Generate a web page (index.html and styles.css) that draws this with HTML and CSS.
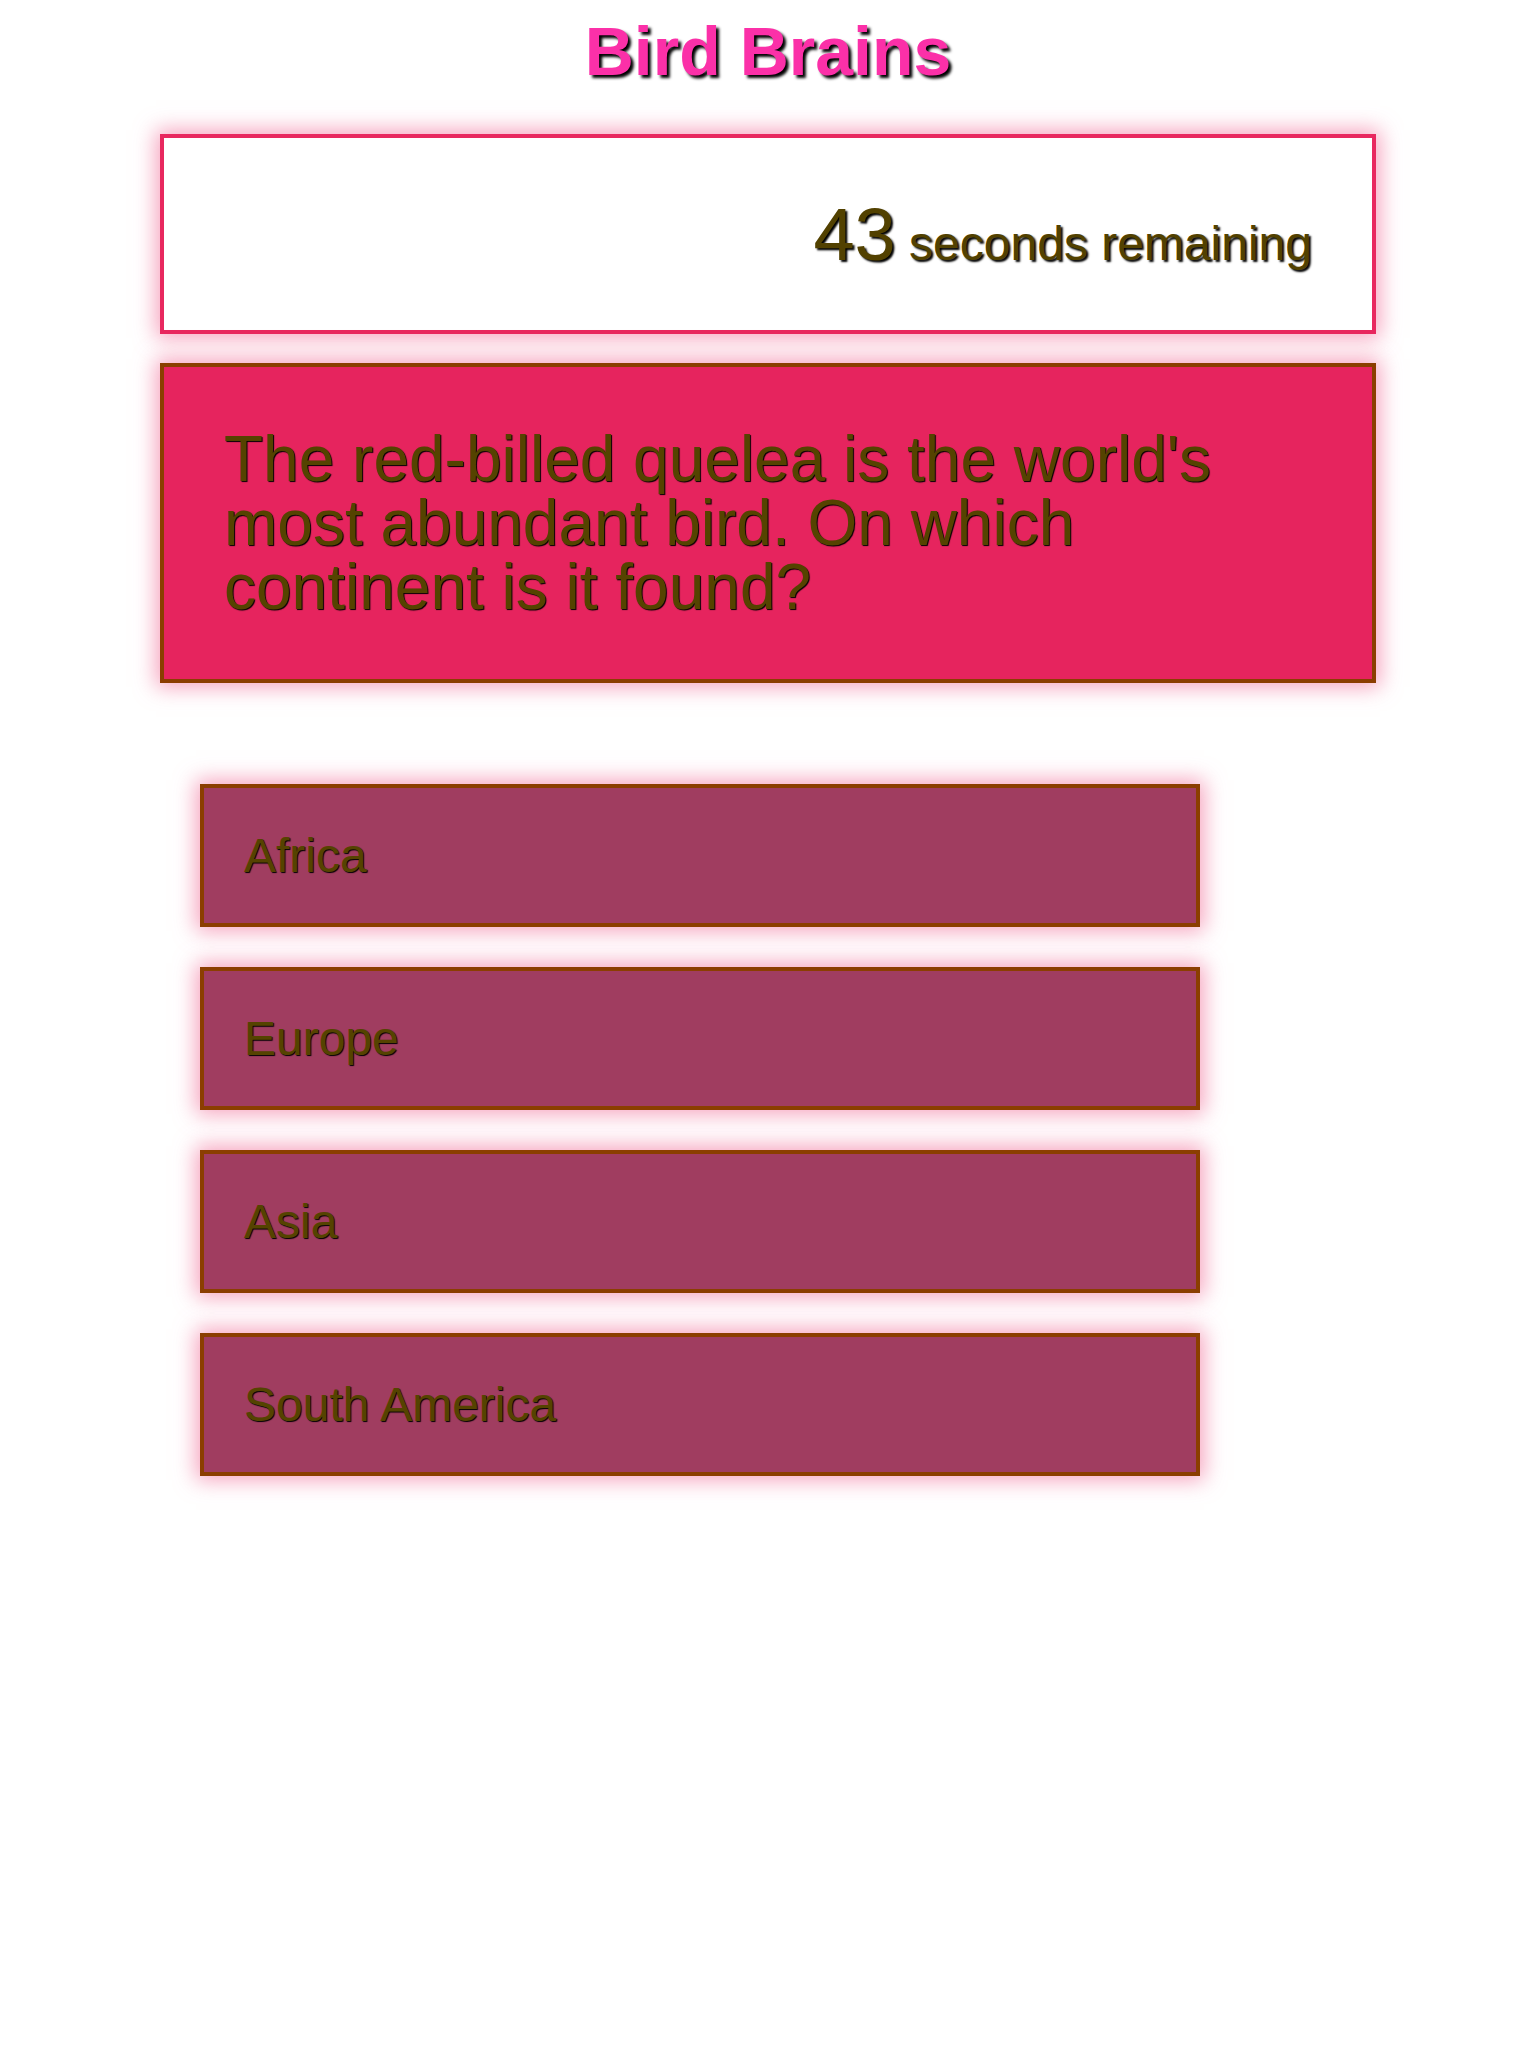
FILE: index.html
```html
<!DOCTYPE html>
<html lang="en">
<head>
<meta charset="utf-8">
<title>Bird Brains</title>
<link rel="stylesheet" href="styles.css">
</head>
<body>
<h1 class="title">Bird Brains</h1>
<div class="timer">
  <span class="timer-text"><span class="timer-num">43</span> <span class="timer-label">seconds remaining</span></span>
</div>
<div class="question">The red-billed quelea is the world's most abundant bird. On which continent is it found?</div>
<div class="answers">
  <div class="answer">Africa</div>
  <div class="answer">Europe</div>
  <div class="answer">Asia</div>
  <div class="answer">South America</div>
</div>
</body>
</html>
```
FILE: styles.css
```css
body {
  margin: 8px;
  background: #ffffff;
  font-family: "Liberation Sans", Arial, sans-serif;
}
.title {
  margin: 4px 0 0;
  text-align: center;
  font-size: 68px;
  font-weight: bold;
  color: #fb30a8;
  text-shadow: 3px 3px 3px #000;
}
.timer {
  box-sizing: border-box;
  width: 80%;
  height: 200px;
  margin: 44px auto 0;
  border: 4px solid #e8285f;
  background: #fff;
  box-shadow: 0 0 20px 4px rgba(240, 100, 145, 0.6);
  display: flex;
  justify-content: flex-end;
  align-items: center;
  padding: 0 60px 0 0;
}
.timer-text {
  white-space: nowrap;
  font-size: 48px;
  color: #524100;
  text-shadow: 2px 2px 2px #000;
}
.timer-num {
  font-size: 74px;
}
.timer-label {
  font-size: 48px;
}
.question {
  box-sizing: border-box;
  width: 80%;
  margin: 29px auto 0;
  padding: 60px 60px;
  border: 4px solid #8b3e00;
  background: #e6245e;
  box-shadow: 0 0 20px 4px rgba(240, 100, 145, 0.6);
  color: #554300;
  font-size: 64px;
  line-height: 64px;
  text-shadow: 1px 1px 1px #000;
}
.answers {
  width: 80%;
  margin: 101px auto 0;
  padding-left: 40px;
  box-sizing: border-box;
}
.answer {
  box-sizing: border-box;
  width: 1000px;
  height: 143px;
  margin-bottom: 40px;
  padding: 0 40px;
  border: 4px solid #8b3e00;
  background: #a03d60;
  box-shadow: 0 0 20px 4px rgba(240, 100, 145, 0.6);
  color: #554300;
  font-size: 48px;
  display: flex;
  align-items: center;
  text-shadow: 1px 1px 1px #000;
}
```
